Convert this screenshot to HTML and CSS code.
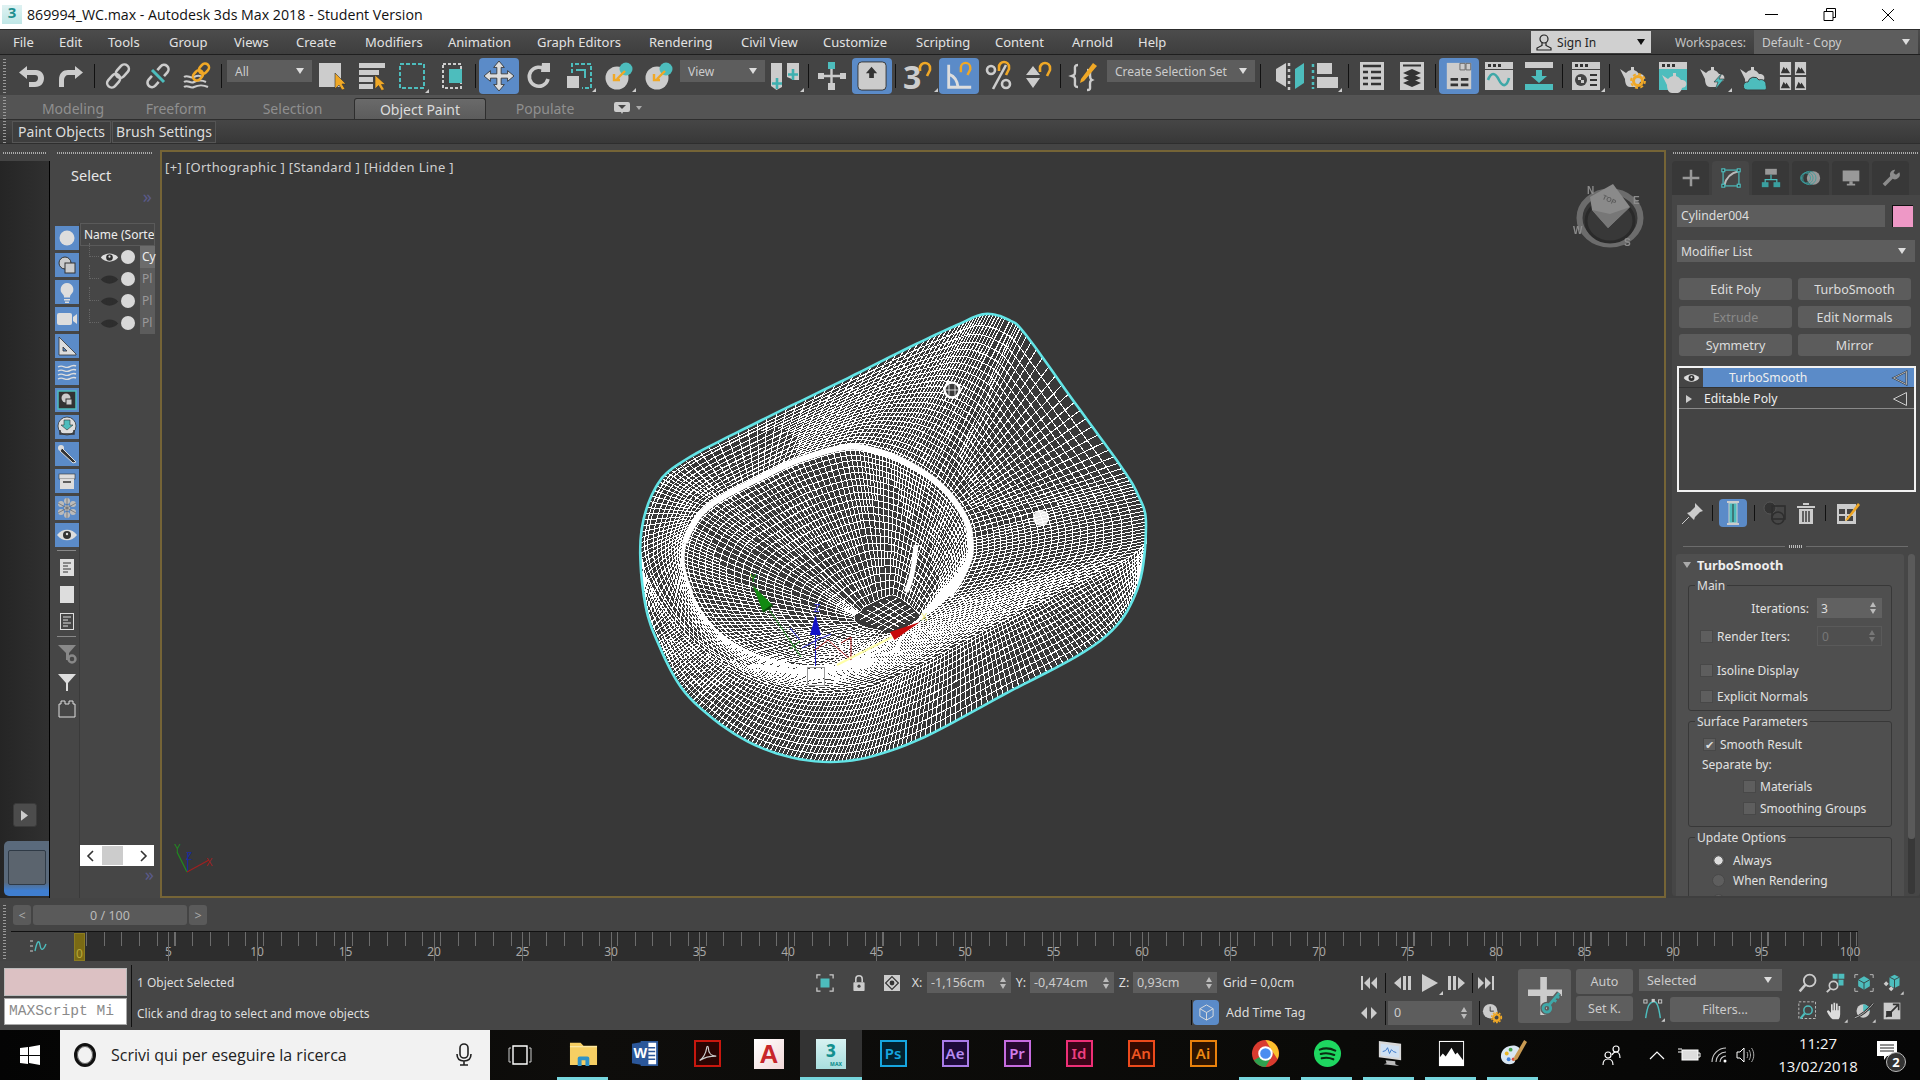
FILE: index.html
```html
<!DOCTYPE html>
<html lang="it">
<head>
<meta charset="utf-8">
<title>869994_WC.max - Autodesk 3ds Max 2018 - Student Version</title>
<link rel="stylesheet" href="styles.css">
</head>
<body>
<svg class="defs" width="0" height="0">
<defs>
<symbol id="eye" viewBox="0 0 24 14"><path d="M1 7C6 0 18 0 23 7 18 14 6 14 1 7z" fill="currentColor"/><circle cx="12" cy="7" r="4.2" fill="#2e2e2e"/><circle cx="12" cy="6" r="1.4" fill="currentColor"/></symbol>
<symbol id="pot" viewBox="0 0 28 28"><path d="M1 7l6 4a8 8 0 0 1 5-3V5h3v3a8 8 0 0 1 5 4h2a4 4 0 0 1 2 7l-3 1c-1 4-3 5-5 5h-5c-3 0-5-3-5-8z" fill="#ccc"/></symbol>
<symbol id="mnt" viewBox="0 0 12 14"><rect width="12" height="14" fill="#ccc"/><path d="M1 12l3-7 2 3 1-2 4 6z" fill="#333"/></symbol>
</defs>
</svg>

<header class="titlebar">
  <div class="appicon"><span class="big3">3</span></div>
  <div class="title">869994_WC.max - Autodesk 3ds Max 2018 - Student Version</div>
  <div class="winctl">
    <svg class="wbtn" viewBox="0 0 58 29"><path d="M23 14.5h13" stroke="#000"/></svg>
    <svg class="wbtn" viewBox="0 0 58 29"><path d="M24 11.5h9v9h-9zM26.500 11V8.500h9v9H33" fill="none" stroke="#000"/></svg>
    <svg class="wbtn" viewBox="0 0 58 29"><path d="M24 9l12 12M36 9 24 21" stroke="#000" fill="none"/></svg>
  </div>
</header>

<nav class="menubar">
  <span class="m" style="width:46px">File</span><span class="m" style="width:49px">Edit</span><span class="m" style="width:61px">Tools</span><span class="m" style="width:65px">Group</span><span class="m" style="width:62px">Views</span><span class="m" style="width:69px">Create</span><span class="m" style="width:83px">Modifiers</span><span class="m" style="width:89px">Animation</span><span class="m" style="width:112px">Graph Editors</span><span class="m" style="width:92px">Rendering</span><span class="m" style="width:82px">Civil View</span><span class="m" style="width:93px">Customize</span><span class="m" style="width:79px">Scripting</span><span class="m" style="width:77px">Content</span><span class="m" style="width:66px">Arnold</span><span class="m">Help</span>
  <div class="signin">
    <svg class="signic" viewBox="0 0 16 18"><circle cx="8" cy="6" r="4" fill="none" stroke="#222" stroke-width="1.200"/><path d="M6 9.500v3l-5 2.500v2h14v-2l-5-2.500v-3" fill="none" stroke="#222" stroke-width="1.200"/></svg>
    <span class="signtxt">Sign In</span><span class="caret dark"></span>
  </div>
  <span class="wslabel">Workspaces:</span>
  <div class="drop ws"><span>Default - Copy</span><span class="caret"></span></div>
</nav>

<div class="toolbar">
  <span class="vgrip"></span>
  <div class="tb"><svg viewBox="0 0 28 28"><path d="M10 4 2 10.500 10 17v-4h8c2 0 3 1 3 3s-1 4-4 4h-5v5h6c6 0 9-4 9-9 0-4-3-8-8-8h-9z" fill="#ccc"/></svg></div>
  <div class="tb"><svg viewBox="0 0 28 28"><path d="M18 4 26 10.500 18 17v-4h-7c-2 0-4 2-4 5v7H2v-7C2 11 6 8 11 8h7z" fill="#ccc"/></svg></div>
  <span class="sep"></span>
  <div class="tb"><svg viewBox="0 0 28 28"><g fill="none" stroke="#ccc" stroke-width="2.600" transform="rotate(-48 14 14)"><rect x="0" y="9.500" width="15" height="9" rx="4.500"/><rect x="13" y="9.500" width="15" height="9" rx="4.500"/></g></svg></div>
  <div class="tb"><svg viewBox="0 0 28 28"><g fill="none" stroke="#ccc" stroke-width="2.600" transform="rotate(-48 14 14)"><path d="M10 9.500H5a4.500 4.500 0 0 0 0 9h5M18 9.500h5a4.500 4.500 0 0 1 0 9h-5"/></g><path d="M8 8l12 12" stroke="#4dbdbd" stroke-width="3"/></svg></div>
  <div class="tb"><svg viewBox="0 0 28 28"><g fill="none" stroke="#ccc" stroke-width="2"><path d="M0 15c4-3 6 2 10 0s6-2 8 0M0 20c4-3 6 2 10 0s8-2 12 0M0 25c4-3 6 2 10 0s10-2 14 0"/></g><g fill="none" stroke="#f0a826" stroke-width="2.600" transform="rotate(-48 17 10)"><rect x="7" y="6" width="11" height="8" rx="4"/><rect x="16" y="6" width="11" height="8" rx="4"/></g></svg></div>
  <span class="sep"></span>
  <div class="drop tdrop w85"><span>All</span><span class="caret"></span></div>
  <div class="tb"><svg viewBox="0 0 28 28"><rect x="1" y="1" width="22" height="24" fill="#ccc"/><path d="M17 11v16l4-4 3 5 3-1-3-5h4z" fill="#f0a826" stroke="#333" stroke-width=".6"/></svg></div>
  <div class="tb"><svg viewBox="0 0 28 28"><path d="M1 1h26v5H1zM1 8h20v5H1zM1 15h14v5H1zM1 22h14v5H1z" fill="#ccc"/><path d="M17 13v14l3.500-3.500 3 5 3-1-3-5h4z" fill="#f0a826" stroke="#333" stroke-width=".6"/></svg></div>
  <div class="tb"><svg viewBox="0 0 28 28"><rect x="2" y="2" width="24" height="24" fill="none" stroke="#4dbdbd" stroke-width="2" stroke-dasharray="4 2"/><path d="M28 28v-4l-4 4z" fill="#ccc" transform="translate(3 3)"/></svg></div>
  <div class="tb"><svg viewBox="0 0 28 28"><rect x="5" y="2" width="18" height="24" fill="none" stroke="#ccc" stroke-width="2" stroke-dasharray="3 2"/><rect x="11" y="7" width="13" height="14" fill="#4dbdbd"/></svg></div>
  <span class="sep"></span>
  <div class="tb on"><svg viewBox="0 0 28 28"><path d="M14 0l5 6h-3v6h6V9l6 5-6 5v-3h-6v6h3l-5 6-5-6h3v-6H6v3l-6-5 6-5v3h6V6H9z" fill="#ddd" stroke="#333" stroke-width=".8"/></svg></div>
  <div class="tb"><svg viewBox="0 0 28 28"><path d="M20.500 8A9.500 9.500 0 1 0 23 17" fill="none" stroke="#ccc" stroke-width="3.600"/><path d="M17 1h8v9h-9z" fill="#ccc"/></svg></div>
  <div class="tb"><svg viewBox="0 0 28 28"><rect x="2" y="14" width="12" height="12" fill="#ccc"/><path d="M7 11V2h19v24h-9" fill="none" stroke="#4dbdbd" stroke-width="2" stroke-dasharray="4 2"/><path d="M11 8h9v8" fill="none" stroke="#4dbdbd" stroke-width="2"/><path d="M31 30v-4l-4 4z" fill="#ccc"/></svg></div>
  <div class="tb"><svg viewBox="0 0 28 28"><circle cx="12" cy="16" r="11.500" fill="#ccc"/><circle cx="21" cy="7" r="6.500" fill="#4dbdbd"/><path d="M20 9l-8 8M9 12v6h6" fill="none" stroke="#f0a826" stroke-width="2.400"/><path d="M31 30v-4l-4 4z" fill="#ccc"/></svg></div>
  <div class="tb"><svg viewBox="0 0 28 28"><circle cx="12" cy="16" r="11.500" fill="#ccc"/><circle cx="21" cy="7" r="6.500" fill="#4dbdbd"/><path d="M20 9l-8 8M9 12v6h6" fill="none" stroke="#f0a826" stroke-width="2.400"/></svg></div>
  <div class="drop tdrop w85 vd"><span>View</span><span class="caret"></span></div>
  <div class="tb"><svg viewBox="0 0 28 28"><path d="M0 1h11v24l-5.500 3L0 24z" fill="#ccc"/><path d="M16 1h12v17h-5l-7-3z" fill="#ccc"/><path d="M6 16v11M1 21.500h10M22 7v11M17 12.500h10" stroke="#3fb0b0" stroke-width="2.600"/><path d="M33 30v-4l-4 4z" fill="#ccc"/></svg></div>
  <span class="sep"></span>
  <div class="tb"><svg viewBox="0 0 28 28"><rect x="10" y="0" width="7" height="7" fill="#4dbdbd"/><path d="M13.500 7v14M1 14h26" stroke="#ccc" stroke-width="2.400"/><rect x="0" y="11" width="6" height="6" fill="#ccc"/><rect x="22" y="11" width="6" height="6" fill="#ccc"/><rect x="10" y="21" width="7" height="7" fill="#ccc"/></svg></div>
  <div class="tb on"><svg viewBox="0 0 32 32"><rect x="1" y="1" width="30" height="30" rx="4" fill="#ccc" stroke="#333"/><path d="M15.500 6l6 7h-3.500v5h-5v-5H9.500z" fill="#333"/></svg></div>
  <span class="sep"></span>
  <div class="tb"><svg viewBox="0 0 28 28"><text x="-2" y="27" class="snaptxt">3</text><path d="M15 9V6a5 5 0 0 1 10 0v2l-3 6" fill="none" stroke="#f0a826" stroke-width="2.600"/><path d="M33 30v-4l-4 4z" fill="#ccc"/></svg></div>
  <div class="tb on"><svg viewBox="0 0 32 32"><path d="M5 4v24h24" fill="none" stroke="#ddd" stroke-width="3"/><path d="M5 14c6 2 9 6 10 14" fill="none" stroke="#ddd" stroke-width="3"/><path d="M18 12V7a5 5 0 0 1 10 0v2l-3 6" fill="none" stroke="#f0a826" stroke-width="2.600"/></svg></div>
  <div class="tb"><svg viewBox="0 0 28 28"><circle cx="6" cy="8" r="4" fill="none" stroke="#ccc" stroke-width="2.600"/><circle cx="21" cy="22" r="4" fill="none" stroke="#ccc" stroke-width="2.600"/><path d="M21 3 8 27" stroke="#ccc" stroke-width="2.600"/><path d="M14 9V5a5 5 0 0 1 10 0v2l-3 6" fill="none" stroke="#f0a826" stroke-width="2.600"/></svg></div>
  <div class="tb"><svg viewBox="0 0 28 28"><path d="M8 4l7 9H1zM1 16h14l-7 10z" fill="#ccc"/><path d="M15 10V6a5 5 0 0 1 10 0v2l-3 6" fill="none" stroke="#f0a826" stroke-width="2.600"/></svg></div>
  <span class="sep s2"></span>
  <div class="tb"><svg viewBox="0 0 28 28"><path d="M8 3C4 3 5 6 5 9s0 4-3 5c3 1 3 2 3 5s-1 6 3 6M17 8c4 0 3 3 3 5s0 4 2 5c-2 1-2 2-2 5s1 5-3 5" fill="none" stroke="#ccc" stroke-width="2.400"/><path d="M11 17 23 1l4 3-13 15-4 2z" fill="#f0a826"/></svg></div>
  <div class="drop tdrop css"><span>Create Selection Set</span><span class="caret"></span></div>
  <span class="sep s3"></span>
  <div class="tb"><svg viewBox="0 0 28 28"><path d="M0 7l10-6v24L0 19z" fill="#ccc"/><path d="M13 1v3M13 7v3M13 13v3M13 19v3M13 25v3" stroke="#ccc" stroke-width="2.500"/><path d="M19 7l9-6v20l-9 6z" fill="#4dbdbd"/></svg></div>
  <div class="tb al"><svg viewBox="0 0 28 28"><path d="M2 2v3M2 8v3M2 14v3M2 20v3M2 25v2" stroke="#4dbdbd" stroke-width="2.500"/><rect x="6" y="1" width="15" height="11" fill="#ccc"/><rect x="6" y="15" width="21" height="11" fill="#ccc"/><path d="M31 30v-4l-4 4z" fill="#ccc"/></svg></div>
  <span class="sep"></span>
  <div class="tb"><svg viewBox="0 0 28 28"><rect x="2" y="0" width="24" height="28" fill="#ccc"/><path d="M5 4h18M5 10h5M13 10h10M5 16h5M13 16h10M5 22h5M13 22h10" stroke="#333" stroke-width="2.400"/></svg></div>
  <div class="tb"><svg viewBox="0 0 28 28"><rect x="2" y="0" width="24" height="28" fill="#ccc"/><path d="M5 3.500h18" stroke="#333" stroke-width="2"/><path d="M14 7l9 4-9 4-9-4zM14 12l9 4-9 4-9-4zM14 17l9 4-9 4-9-4z" fill="#333"/></svg></div>
  <span class="sep"></span>
  <div class="tb on"><svg viewBox="0 0 32 32"><path d="M3 2h26v28H3z" fill="#ccc"/><path d="M17 2.500h5.500v7H17zM23.500 2.500h5v7h-5z" fill="#ccc" stroke="#666"/><path d="M7 18h8v3H7zM18 18h8v3h-8zM7 24h8v3H7zM18 24h8v3h-8z" fill="#333"/></svg></div>
  <div class="tb"><svg viewBox="0 0 28 28"><rect width="28" height="7" fill="#ccc"/><path d="M3 2h3v3H3zM8 2h3v3H8zM13 2h3v3h-3z" fill="#333"/><rect y="8" width="28" height="20" fill="#ccc"/><path d="M3 18c3-8 7-8 11 0s8 6 10-2" fill="none" stroke="#3fa8a8" stroke-width="2.600"/></svg></div>
  <div class="tb"><svg viewBox="0 0 28 28"><rect y="0" width="28" height="6" fill="#ccc"/><path d="M11 8h6v6h5l-8 7-8-7h5z" fill="#4dbdbd"/><rect y="22" width="28" height="6" fill="#4dbdbd"/></svg></div>
  <span class="sep"></span>
  <div class="tb"><svg viewBox="0 0 28 28"><rect width="28" height="7" fill="#ccc"/><path d="M3 2h3v3H3zM8 2h3v3H8zM13 2h3v3h-3z" fill="#333"/><rect y="8" width="28" height="20" fill="#ccc"/><circle cx="9" cy="18" r="6" fill="#444"/><path d="M6 15h3v3H6zM9 18h3v3H9z" fill="#ccc"/><path d="M18 13h7M18 18h7M18 23h7" stroke="#333" stroke-width="2"/><path d="M33 30v-4l-4 4z" fill="#ccc"/></svg></div>
  <span class="sep"></span>
  <div class="tb"><svg viewBox="0 0 28 28"><use href="#pot"/><circle cx="19" cy="19" r="4.500" fill="none" stroke="#f0a826" stroke-width="3"/><circle cx="19" cy="19" r="7" fill="none" stroke="#f0a826" stroke-width="1.800" stroke-dasharray="3 2.500"/></svg></div>
  <div class="tb"><svg viewBox="0 0 28 28"><rect width="28" height="28" fill="#4dbdbd"/><rect width="28" height="7" fill="#ccc"/><path d="M3 2h3v3H3zM8 2h3v3H8zM13 2h3v3h-3z" fill="#333"/><svg x="2" y="6" width="24" height="22" viewBox="0 0 28 28"><use href="#pot"/></svg></svg></div>
  <div class="tb"><svg viewBox="0 0 28 28"><use href="#pot"/><path d="M23 11l-8 9h4l-3 8 9-11h-5z" fill="#4dbdbd" stroke="#333" stroke-width=".6"/><path d="M33 30v-4l-4 4z" fill="#ccc"/></svg></div>
  <div class="tb"><svg viewBox="0 0 28 28"><use href="#pot"/><path d="M8 28a4 4 0 0 1 1-8 6 6 0 0 1 11-2 5 5 0 0 1 7 5c1 3 0 5-1 5z" fill="#4dbdbd" stroke="#3c3c3c"/></svg></div>
  <div class="tb"><svg viewBox="0 0 28 28"><use href="#mnt" width="13" height="13"/><use href="#mnt" x="15" width="13" height="13"/><use href="#mnt" y="15" width="13" height="13"/><use href="#mnt" x="15" y="15" width="13" height="13"/></svg></div>
</div>

<div class="ribbontabs">
  <span class="vgrip g2"></span>
  <span class="rt" style="width:124px">Modeling</span><span class="rt" style="width:82px">Freeform</span><span class="rt" style="width:137px;padding-left:14px">Selection</span><span class="rt act">Object Paint</span><span class="rt" style="width:118px">Populate</span>
  <svg class="chat" viewBox="0 0 16 12"><path d="M2 0h12a2 2 0 0 1 2 2v6a2 2 0 0 1-2 2H9l-1 2-1-2H2a2 2 0 0 1-2-2V2a2 2 0 0 1 2-2z" fill="#ccc"/><path d="M4 3h8l-4 4z" fill="#444"/></svg>
  <span class="caret tiny"></span>
</div>
<div class="ribbonpanel">
  <span class="vgrip g2"></span>
  <span class="rb" style="width:99px">Paint Objects</span><span class="rb" style="width:104px">Brush Settings</span>
</div>
<div class="gapstrip"></div>

<main class="main">
  <aside class="leftstrip">
    <div class="gripwrap"><span class="hgrip"></span></div>
    <div class="leftdark">
      <div class="playbtn"><svg viewBox="0 0 8 12"><path d="M0 0l8 6-8 6z" fill="#ccc"/></svg></div>
      <div class="vpthumb"><div class="vpthumbin"></div></div>
    </div>
  </aside>
  <aside class="explorer">
    <div class="exhead">
      <div class="gripwrap pad"><span class="hgrip"></span></div>
      <div class="seltitle">Select</div>
      <div class="chev">»</div>
    </div>
    <div class="exbody">
      <div class="xcol">
        <div class="xi"><svg viewBox="0 0 24 24"><circle cx="12" cy="12" r="7.500" fill="#ddd"/></svg></div>
        <div class="xi"><svg viewBox="0 0 24 24"><circle cx="10" cy="10" r="6" fill="#ccc" stroke="#333" stroke-width="1"/><rect x="10" y="10" width="10" height="10" fill="#ccc" stroke="#333"/></svg></div>
        <div class="xi"><svg viewBox="0 0 24 24"><path d="M12 3a6.500 6.500 0 0 0-4 11.500c1 1 1 2 1 3h6c0-1 0-2 1-3A6.500 6.500 0 0 0 12 3zM9 19h6v1.500H9zM10 21.500h4V23h-4z" fill="#ddd"/></svg></div>
        <div class="xi"><svg viewBox="0 0 24 24"><rect x="2" y="6" width="15" height="12" rx="2" fill="#ddd"/><path d="M18 10l4-3v10l-4-3z" fill="#ddd"/></svg></div>
        <div class="xi"><svg viewBox="0 0 24 24"><path d="M4 3l17 17v1H4zM8 13v4h4z" fill="#ddd" fill-rule="evenodd" stroke="#333" stroke-width=".8"/></svg></div>
        <div class="xi"><svg viewBox="0 0 24 24"><path d="M3 6c5-3 7 2 11 0s5-2 7-1M3 10c5-3 7 2 11 0s5-2 7-1M3 14c5-3 7 2 11 0s5-2 7-1M3 18c5-3 7 2 11 0s5-2 7-1" fill="none" stroke="#ddd" stroke-width="1.400"/></svg></div>
        <div class="xi"><svg viewBox="0 0 24 24"><rect x="3" y="3" width="18" height="18" fill="#333" stroke="#4dbdbd" stroke-width="1.500"/><circle cx="11" cy="10" r="4.500" fill="#ccc"/><rect x="11" y="11" width="6" height="6" fill="#ccc" stroke="#333"/></svg></div>
        <div class="xi"><svg viewBox="0 0 24 24"><circle cx="12" cy="11" r="9" fill="#ddd" stroke="#333" stroke-width=".8"/><path d="M9 5h6v5h3l-6 5-6-5h3z" fill="#4dbdbd" stroke="#333" stroke-width=".6"/><path d="M5 15v4h14v-4" fill="none" stroke="#333" stroke-width="1.400"/></svg></div>
        <div class="xi"><svg viewBox="0 0 24 24"><circle cx="6" cy="6" r="3" fill="#ddd"/><path d="M7 6l14 14-3 1L5 9z" fill="#333" stroke="#ddd"/></svg></div>
        <div class="xi"><svg viewBox="0 0 24 24"><rect x="4" y="5" width="16" height="5" fill="#ddd" stroke="#333" stroke-width=".6"/><rect x="5" y="10" width="14" height="10" fill="#ddd"/><path d="M8 13h8" stroke="#333" stroke-width="1.500"/></svg></div>
        <div class="xi"><svg viewBox="0 0 24 24"><g fill="#bbb"><circle cx="12" cy="12" r="3"/><circle cx="12" cy="5" r="3"/><circle cx="12" cy="19" r="3"/><circle cx="6" cy="8" r="3"/><circle cx="18" cy="8" r="3"/><circle cx="6" cy="16" r="3"/><circle cx="18" cy="16" r="3"/></g><path d="M12 2v20M3 7l18 10M21 7 3 17" stroke="#666" stroke-width=".7"/></svg></div>
        <div class="xi"><svg viewBox="0 0 24 24"><path d="M2 12C7 5 17 5 22 12 17 19 7 19 2 12z" fill="#ddd"/><circle cx="12" cy="12" r="4" fill="#333"/><circle cx="12" cy="11" r="1.200" fill="#ddd"/></svg></div>
        <div class="xsep"></div>
        <div class="xp"><svg viewBox="0 0 24 24"><rect x="3" y="0" width="14" height="17" fill="#ddd" transform="translate(2 4)"/><path d="M8 8h8M8 11h5M8 14h8M8 17h5" stroke="#333"/></svg></div>
        <div class="xp"><svg viewBox="0 0 24 24"><rect x="5" y="4" width="14" height="17" fill="#ddd"/></svg></div>
        <div class="xp"><svg viewBox="0 0 24 24"><rect x="5.500" y="4.500" width="13" height="16" fill="none" stroke="#ddd"/><path d="M8 8h8M8 11h5M8 14h8M8 17h5" stroke="#ddd"/></svg></div>
        <div class="xsep s"></div>
        <div class="xp"><svg viewBox="0 0 24 24"><path d="M3 3h18l-7 8v7h-3v-7z" fill="#888"/><circle cx="17" cy="17" r="3.500" fill="none" stroke="#888" stroke-width="2.400"/></svg></div>
        <div class="xp"><svg viewBox="0 0 24 24"><path d="M3 5h18l-8 9v8h-2v-8z" fill="#ddd"/></svg></div>
        <div class="xp"><svg viewBox="0 0 24 24"><path d="M4 8h2V5h4v3h4V5h4v3h2v13H4z" fill="none" stroke="#ddd"/></svg></div>
      </div>
      <div class="xlist">
        <div class="xhead">Name (Sorte</div>
        <div class="xrow"><span class="stub"></span><svg class="roweye"><use href="#eye" style="color:#ddd"/></svg><span class="rowdot"></span><span class="rowname cur">Cy</span></div>
        <div class="xrow"><span class="stub"></span><svg class="roweye"><use href="#eye" style="color:#2e2e2e"/></svg><span class="rowdot"></span><span class="rowname">Pl</span></div>
        <div class="xrow"><span class="stub"></span><svg class="roweye"><use href="#eye" style="color:#2e2e2e"/></svg><span class="rowdot"></span><span class="rowname">Pl</span></div>
        <div class="xrow"><span class="stub"></span><svg class="roweye"><use href="#eye" style="color:#2e2e2e"/></svg><span class="rowdot"></span><span class="rowname">Pl</span></div>
        <div class="xscroll"><svg viewBox="0 0 8 12"><path d="M7 1 2 6l5 5" fill="none" stroke="#333" stroke-width="1.600"/></svg><span class="xthumb"></span><svg viewBox="0 0 8 12"><path d="M1 1l5 5-5 5" fill="none" stroke="#333" stroke-width="1.600"/></svg></div>
        <div class="chev low">»</div>
      </div>
    </div>
  </aside>

  <section class="viewport">
    <div class="vplabel">[+] [Orthographic ] [Standard ] [Hidden Line ]</div>
    <svg id="mesh" class="meshsvg" viewBox="162 152 1502 744" xmlns="http://www.w3.org/2000/svg">
      <g id="meshlines"></g>
      <g class="gizmo">
        <path d="M768 608 801 657M790 649 800 641" stroke="#1a8a1a" fill="none"/>
        <path d="M815.500 635V666M800 640 790 628M802 648l15-8 14-6" stroke="#2020c8" fill="none"/>
        <path d="M828 640 851 660V637l-10 6M828 640l-13 10" stroke="#b02020" fill="none"/>
        <path d="M892 637 837 665" stroke="#ffffa8" stroke-width="2"/>
        <path d="M752.500 585 772.500 605 763 612z" fill="#128a12"/>
        <path d="M763 612 772.500 605 769 608z" fill="#0a4a0a" stroke="#0a4a0a" stroke-width="2"/>
        <path d="M815.500 615 821 635h-11z" fill="#1010c8"/>
        <path d="M920 622 890 632 894.500 640z" fill="#c80a0a"/>
        <rect x="807.500" y="667.500" width="17" height="18" fill="none" stroke="#999"/>
        <text x="750" y="582" class="gl" fill="#0c9a0c">Y</text>
        <text x="814" y="612" class="gl" fill="#2424d0">Z</text>
        <text x="921" y="621" class="gl" fill="#e6e67a">X</text>
      </g>
      <g class="tripod">
        <path d="M187.500 872V853" stroke="#1c2c9c" stroke-width="1.200"/>
        <path d="M187 872 177 852" stroke="#1f8a1f" stroke-width="1.200"/>
        <path d="M187 872 209 860" stroke="#a02020" stroke-width="1.200"/>
        <text x="174" y="852" class="tl" fill="#1f8a1f">Y</text>
        <text x="186" y="860" class="tl" fill="#1c2c9c">Z</text>
        <text x="206" y="866" class="tl" fill="#a02020">X</text>
      </g>
      <g class="cube">
        <ellipse cx="1610" cy="218" rx="30.500" ry="26.500" fill="none" stroke="#6c6c6c" stroke-width="6"/>
        <ellipse cx="1610" cy="221" rx="24" ry="21" fill="none" stroke="#2a2a2a" stroke-width="3"/>
        <path d="M1590 197 1613 184 1630 207 1608 228 1592 210z" fill="#8a8a8a"/>
        <path d="M1592 210 1608 228 1630 207 1610 214z" fill="#777"/>
        <text x="1602" y="202" class="cl" transform="rotate(25 1609 200)" fill="#5c5c5c">TOP</text>
        <text x="1587" y="194" class="cd">N</text><text x="1633" y="204" class="cd">E</text>
        <text x="1624" y="246" class="cd">S</text><text x="1573" y="234" class="cd">W</text>
      </g>
    </svg>
  </section>

  <aside class="cmd">
    <div class="gripwrap rgrip"><span class="hgrip"></span></div>
    <div class="cmdtabs">
      <div class="ct"><svg viewBox="0 0 24 24"><path d="M10.500 2h3v8.500H22v3h-8.500V22h-3v-8.500H2v-3h8.500z" fill="#999"/></svg></div>
      <div class="ct act"><svg viewBox="0 0 24 24"><path d="M4 21C6 12 12 6 21 4" fill="none" stroke="#bbb" stroke-width="2.400"/><rect x="2.500" y="2.500" width="19" height="19" fill="none" stroke="#4dbdbd" stroke-width="1.400"/><g fill="#333" stroke="#4dbdbd" stroke-width="1.400"><rect x="1" y="1" width="3.500" height="3.500"/><rect x="19.500" y="1" width="3.500" height="3.500"/><rect x="1" y="19.500" width="3.500" height="3.500"/><rect x="19.500" y="19.500" width="3.500" height="3.500"/></g></svg></div>
      <div class="ct"><svg viewBox="0 0 24 24"><rect x="5" y="1" width="14" height="7" fill="#999"/><path d="M12 8v6M5 18v-4h14v4" fill="none" stroke="#4dbdbd" stroke-width="1.400"/><rect x="1" y="17" width="8" height="6" fill="#3a9f9f"/><rect x="15" y="17" width="8" height="6" fill="#3a9f9f"/></svg></div>
      <div class="ct"><svg viewBox="0 0 24 24"><circle cx="15" cy="12" r="8" fill="#999"/><circle cx="10" cy="12" r="8" fill="none" stroke="#3a9f9f"/><circle cx="7.500" cy="12" r="7" fill="none" stroke="#3a9f9f"/><circle cx="5.500" cy="12" r="6" fill="none" stroke="#3a9f9f"/></svg></div>
      <div class="ct"><svg viewBox="0 0 24 24"><rect x="2" y="3" width="20" height="13" fill="#999"/><path d="M10 16h4v3h-4zM7 19h10v2H7z" fill="#999"/></svg></div>
      <div class="ct"><svg viewBox="0 0 24 24"><path d="M16 2a6 6 0 0 0-5 8L2 19l3 3 9-9a6 6 0 0 0 8-8l-4 3-3-2 2-4z" fill="#8c8c8c"/></svg></div>
    </div>
    <div class="cmdbody">
      <div class="namerow"><div class="field name">Cylinder004</div><div class="swatch"></div></div>
      <div class="field modlist"><span>Modifier List</span><span class="caret"></span></div>
      <div class="modbtns">
        <div class="mb">Edit Poly</div><div class="mb">TurboSmooth</div>
        <div class="mb off">Extrude</div><div class="mb">Edit Normals</div>
        <div class="mb">Symmetry</div><div class="mb">Mirror</div>
      </div>
      <div class="stack">
        <div class="srow sel"><span class="seye"><svg class="sey"><use href="#eye" style="color:#ddd"/></svg></span><span class="stxt">TurboSmooth</span>
          <svg class="stri" viewBox="0 0 16 16"><path d="M14.500 1.500 1.500 8l13 6.500z" fill="none" stroke="#333" stroke-width="1.800"/><path d="M14.500 1.500 1.500 8l13 6.500z" fill="none" stroke="#ddd" stroke-width=".7"/></svg></div>
        <div class="srow two"><span class="sarrow"></span><span>Editable Poly</span>
          <svg class="stri" viewBox="0 0 16 16"><path d="M14.500 1.500 1.500 8l13 6.500z" fill="none" stroke="#ccc"/></svg></div>
      </div>
      <div class="stools">
        <svg class="st" viewBox="0 0 24 24"><path d="M14 2l8 8-3 1-5 5-1 3-7-7 3-1 5-5z" fill="#ccc"/><path d="M8 16l-7 7" stroke="#ccc"/></svg>
        <span class="ssep"></span>
        <div class="stbtn"><svg viewBox="0 0 14 24"><rect x="3" y="2" width="8" height="20" fill="#4dbdbd" stroke="#ccc"/><path d="M1 1h12M1 23h12" stroke="#ccc" stroke-width="2"/><path d="M7 3v18" stroke="#333"/></svg></div>
        <span class="ssep"></span>
        <svg class="st" viewBox="0 0 24 24"><circle cx="7" cy="7" r="6" fill="#333" stroke="#555"/><rect x="9" y="5" width="13" height="13" fill="none" stroke="#2e2e2e" stroke-width="1.600"/><circle cx="15" cy="17" r="6" fill="none" stroke="#2e2e2e" stroke-width="1.600"/></svg>
        <svg class="st" viewBox="0 0 24 24"><path d="M3 5h18v2H3zM9 2h6v2H9zM5 8h14v15H5z" fill="#ccc"/><path d="M9 10v11M12 10v11M15 10v11" stroke="#333" stroke-width="1.400"/></svg>
        <span class="ssep"></span>
        <svg class="st" viewBox="0 0 24 24"><rect x="1" y="3" width="19" height="20" fill="#ccc"/><path d="M3 8h6v5H3zM11 8h6v5h-6zM3 15h6v5H3zM11 15h6v5h-6z" fill="#444"/><path d="M10 18 22 2l2 2-12 15-3 1z" fill="#f0a826"/></svg>
      </div>
      <div class="sash"><span></span><i></i><span></span></div>
      <div class="rollwrap">
        <div class="roll">
          <div class="rhead"><span class="rtri"></span><b>TurboSmooth</b><span class="rdots"></span></div>
          <div class="grp g-main">
            <span class="lg">Main</span>
            <div class="r it"><span class="rl">Iterations:</span><div class="spin"><span>3</span><span class="spa"></span></div></div>
            <div class="r ri"><span class="cb"></span><span class="rl2">Render Iters:</span><div class="spin dis"><span>0</span><span class="spa"></span></div></div>
            <div class="r iso"><span class="cb"></span><span>Isoline Display</span></div>
            <div class="r exn"><span class="cb"></span><span>Explicit Normals</span></div>
          </div>
          <div class="grp g-surf">
            <span class="lg">Surface Parameters</span>
            <div class="r2"><span class="cb chk">✔</span><span>Smooth Result</span></div>
            <div class="r2 sb"><span>Separate by:</span></div>
            <div class="r2 in"><span class="cb"></span><span>Materials</span></div>
            <div class="r2 in"><span class="cb"></span><span>Smoothing Groups</span></div>
          </div>
          <div class="grp g-upd">
            <span class="lg">Update Options</span>
            <div class="r2 rad"><span class="radio on"></span><span>Always</span></div>
            <div class="r2 rad"><span class="radio"></span><span>When Rendering</span></div>
            <div class="r2 rad"><span class="radio"></span></div>
          </div>
        </div>
        <div class="rscroll"><span></span></div>
      </div>
    </div>
  </aside>
</main>

<div class="timeslider">
  <span class="vgrip g3"></span>
  <div class="ts small">&lt;</div><div class="ts mid">0 / 100</div><div class="ts small">&gt;</div>
</div>
<div class="trackrow">
  <span class="vgrip g3 tall"></span>
  <div class="curve"><svg viewBox="0 0 20 14"><path d="M2 2h3M2 7h3M2 12h3" stroke="#ccc"/><path d="M7 12C9 2 11 0 12 6s3 6 6-1" fill="none" stroke="#4dbdbd" stroke-width="1.400"/></svg></div>
  <div class="track">
    <div class="labels"><span></span><span>5</span><span>10</span><span>15</span><span>20</span><span>25</span><span>30</span><span>35</span><span>40</span><span>45</span><span>50</span><span>55</span><span>60</span><span>65</span><span>70</span><span>75</span><span>80</span><span>85</span><span>90</span><span>95</span><span>100</span></div>
    <div class="thumb">0</div>
  </div>
</div>

<footer class="status">
  <div class="mini"><div class="pink"></div><div class="script">MAXScript Mi</div></div>
  <span class="vbar"></span>
  <div class="msg"><div>1 Object Selected</div><div>Click and drag to select and move objects</div></div>
  <div class="coords">
    <div class="crow">
      <svg class="ci" viewBox="0 0 20 20"><path d="M1 5V1h4M15 1h4v4M1 15v4h4M19 15v4h-4" fill="none" stroke="#ccc" stroke-width="1.400"/><rect x="5" y="5" width="10" height="10" fill="#4dbdbd"/></svg>
      <svg class="ci lock" viewBox="0 0 20 20"><rect x="3" y="9" width="14" height="11" rx="1" fill="#ccc"/><path d="M6 9V5a4 4 0 0 1 8 0v4" fill="none" stroke="#ccc" stroke-width="2"/><circle cx="10" cy="14" r="2" fill="#444"/></svg>
      <svg class="ci abs" viewBox="0 0 20 20"><rect width="20" height="20" fill="#ccc"/><path d="M10 2l8 8-8 8-8-8z" fill="none" stroke="#333" stroke-width="1.500"/><circle cx="10" cy="10" r="3" fill="#333"/></svg>
      <span class="ax">X:</span><div class="cin"><span>-1,156cm</span><span class="spa"></span></div>
      <span class="ax">Y:</span><div class="cin"><span>-0,474cm</span><span class="spa"></span></div>
      <span class="ax">Z:</span><div class="cin"><span>0,93cm</span><span class="spa"></span></div>
      <span class="grid">Grid = 0,0cm</span>
    </div>
    <div class="crow two">
      <span class="tagbar"></span>
      <div class="tagbtn"><svg viewBox="0 0 18 18"><path d="M9 1l7 4v8l-7 4-7-4V5zM2 5l7 4 7-4M9 9v8" fill="none" stroke="#ddd"/></svg></div>
      <span class="tagt">Add Time Tag</span>
    </div>
  </div>
  <div class="anim">
    <div class="arow">
      <svg viewBox="0 0 18 14" class="a1"><path d="M1 0h2v14H1zM10 1 4 7l6 6zM17 1l-6 6 6 6z" fill="#ccc"/></svg>
      <span class="abar"></span>
      <svg viewBox="0 0 18 14" class="a1"><path d="M8 1 1 7l7 6zM10 0h3v14h-3zM15 0h3v14h-3z" fill="#ccc"/></svg>
      <svg viewBox="0 0 18 20" class="a2"><path d="M1 1l16 9-16 9z" fill="#ccc"/><path d="M22 22v-4l-4 4z" fill="#ccc"/></svg>
      <svg viewBox="0 0 18 14" class="a1"><path d="M0 0h3v14H0zM5 0h3v14H5zM10 1l7 6-7 6z" fill="#ccc"/></svg>
      <span class="abar"></span>
      <svg viewBox="0 0 18 14" class="a1"><path d="M1 1l6 6-6 6zM8 1l6 6-6 6zM15 0h2v14h-2z" fill="#ccc"/></svg>
    </div>
    <div class="arow r2nd">
      <svg viewBox="0 0 18 14" class="a1"><path d="M7 1 1 7l6 6zM11 1l6 6-6 6z" fill="#ccc"/></svg>
      <span class="abar"></span>
      <div class="fin"><span>0</span><span class="spa"></span></div>
      <span class="abar"></span>
      <svg viewBox="0 0 22 22" class="a3"><circle cx="9" cy="9" r="8" fill="#ccc"/><path d="M9 4v5h4" fill="none" stroke="#333"/><circle cx="16" cy="16" r="3.500" fill="none" stroke="#f0a826" stroke-width="2.600"/><circle cx="16" cy="16" r="5.500" fill="none" stroke="#f0a826" stroke-width="1.400" stroke-dasharray="2 1.500"/></svg>
    </div>
  </div>
  <div class="keybtn"><svg viewBox="0 0 36 40"><path d="M13 0h7v13h16v7H20v20h-7V20H0v-7h13z" fill="#ccc"/><g fill="none" stroke="#5e5e5e" stroke-width="6"><circle cx="20" cy="33" r="4"/><path d="M22 30 33 17"/></g><g fill="none" stroke="#3fa8a8" stroke-width="3"><circle cx="20" cy="33" r="4"/><path d="M22 30 33 17M30 20l3 2M27 24l3 2"/></g></svg></div>
  <div class="keycol"><div class="kb">Auto</div><div class="kb">Set K.</div></div>
  <div class="selcol">
    <div class="drop seldrop"><span>Selected</span><span class="caret"></span></div>
    <div class="selrow">
      <svg viewBox="0 0 22 24" class="spl"><path d="M3 22C5 8 7 5 11 4s6 4 8 18" fill="none" stroke="#4dbdbd" stroke-width="1.600"/><rect x="1" y="2" width="3.500" height="3.500" fill="none" stroke="#ccc"/><rect x="17" y="2" width="3.500" height="3.500" fill="none" stroke="#ccc"/><rect x="9.500" y="1" width="3.500" height="3.500" fill="#ccc"/><path d="M24 26v-4l-4 4z" fill="#ccc"/></svg>
      <div class="kb filters">Filters...</div>
    </div>
  </div>
  <div class="nav">
    <svg viewBox="0 0 24 24"><circle cx="14" cy="9" r="7" fill="none" stroke="#ccc" stroke-width="2.200"/><path d="M9 14 2 22" stroke="#ccc" stroke-width="3"/></svg>
    <svg viewBox="0 0 24 24"><circle cx="9" cy="15" r="5" fill="none" stroke="#ccc" stroke-width="2"/><path d="M5 19l-4 4" stroke="#ccc" stroke-width="2.400"/><path d="M8 1h6v6H8zM15 1h7v6h-7zM15 8h6v7h-6z" fill="#4dbdbd"/></svg>
    <svg viewBox="0 0 24 24"><path d="M1 6V2h4M19 2h4v4M1 18v4h4M23 18v4h-4" fill="none" stroke="#ccc"/><path d="M12 4l7 4v8l-7 4-7-4V8z" fill="#4dbdbd"/><path d="M5 8l7 4 7-4M12 12v8" fill="none" stroke="#333"/></svg>
    <svg viewBox="0 0 24 24"><path d="M15 2l6 3v10l-6 3-6-3V5z" fill="#4dbdbd"/><path d="M9 5l6 3 6-3M15 8v10" fill="none" stroke="#333"/><path d="M5 10l3 3-3 3-3-3zM11 16l3 3-3 3-3-3z" fill="#ccc"/><path d="M26 26v-4l-4 4z" fill="#ccc"/></svg>
    <svg viewBox="0 0 24 24"><rect x="1" y="1" width="20" height="20" fill="none" stroke="#ccc" stroke-dasharray="3 2"/><circle cx="12" cy="11" r="5" fill="none" stroke="#4dbdbd" stroke-width="1.800"/><path d="M8 15l-5 6" stroke="#4dbdbd" stroke-width="2.400"/></svg>
    <svg viewBox="0 0 24 24"><path d="M8 22c-3-2-6-7-7-10l2-1 3 3V4h2v7h1V2h2v9h1V3h2v8h1V6h2v10c0 3-1 5-2 6z" fill="#ddd"/><path d="M26 26v-4l-4 4z" fill="#ccc"/></svg>
    <svg viewBox="0 0 24 24"><circle cx="11" cy="12" r="8" fill="#ccc"/><path d="M11 4a8 8 0 0 1 8 8h-8z" fill="#4dbdbd"/><path d="M1 20C8 18 18 10 23 3" fill="none" stroke="#333" stroke-width="3"/><path d="M1 20C8 18 18 10 23 3" fill="none" stroke="#ccc"/><path d="M26 26v-4l-4 4z" fill="#ccc"/></svg>
    <svg viewBox="0 0 24 24"><rect x="2" y="2" width="20" height="20" fill="#ccc"/><path d="M13 4h7v7M5 19l14-14" stroke="#333" stroke-width="2" fill="none"/><path d="M5 12h7v7H5z" fill="#333"/></svg>
  </div>
</footer>

<div class="taskbar">
  <div class="start"><svg viewBox="0 0 20 20"><path d="M0 3l8-1v8H0zM9 2l11-2v10H9zM0 11h8v8l-8-1zM9 11h11v9l-11-2z" fill="#fff"/></svg></div>
  <div class="search">
    <span class="cortana"></span>
    <span class="stext">Scrivi qui per eseguire la ricerca</span>
    <svg class="mic" viewBox="0 0 16 24"><rect x="4" y="1" width="8" height="14" rx="4" fill="none" stroke="#222" stroke-width="1.600"/><path d="M1 11c0 5 3 7 7 7s7-2 7-7M8 18v4M4 22h8" fill="none" stroke="#222" stroke-width="1.600"/></svg>
  </div>
  <div class="taskview"><svg viewBox="0 0 24 20"><path d="M5 1h14v18H5z" fill="none" stroke="#fff" stroke-width="1.400"/><path d="M3 3H1v14h2M21 3h2v14h-2" fill="none" stroke="#ccc"/></svg></div>
  <div class="app run"><svg viewBox="0 0 30 30"><path d="M1 4h11l3 3h14v20H1z" fill="#f7cf63"/><path d="M1 8h28" stroke="#fff0b8"/><path d="M9 28v-8a2 2 0 0 1 2-2h8a2 2 0 0 1 2 2v8h-4v-6h-4v6z" fill="#2f93c8"/></svg></div>
  <div class="app"><svg viewBox="0 0 30 30"><path d="M11 3h16v24H11z" fill="#fff" stroke="#2b579a" stroke-width="2"/><path d="M17 9h8M17 13h8M17 17h8M17 21h8" stroke="#2b579a" stroke-width="1.600"/><path d="M1 5l17-3v26L1 25z" fill="#2b579a"/><text x="2.500" y="20" class="wordw">W</text></svg></div>
  <div class="app"><div class="tile" style="border-color:#c8170e;background:#2a0402"><svg viewBox="0 0 24 24"><path d="M3 20c4-3 7-8 8-14 0-3 2-3 2 0 0 6 4 9 9 9-5 0-13 1-19 5z" fill="none" stroke="#ccc" stroke-width="1.400"/></svg></div></div>
  <div class="app"><div class="acad">A</div></div>
  <div class="app cur run"><div class="maxtile"><span>3</span><i>MAX</i></div></div>
  <div class="app"><div class="tile" style="border-color:#16a6e0;background:#02212f;color:#16a6e0">Ps</div></div>
  <div class="app"><div class="tile" style="border-color:#a97ce8;background:#1d0a3a;color:#b68cf0">Ae</div></div>
  <div class="app"><div class="tile" style="border-color:#c66ce0;background:#26082e;color:#d07ce8">Pr</div></div>
  <div class="app"><div class="tile" style="border-color:#ee2f76;background:#3a0418;color:#ee3f80">Id</div></div>
  <div class="app"><div class="tile" style="border-color:#ec4a1c;background:#350a00;color:#ee5522">An</div></div>
  <div class="app"><div class="tile" style="border-color:#e9810c;background:#2e1400;color:#ed8a14">Ai</div></div>
  <div class="app run"><svg viewBox="0 0 30 30"><circle cx="15" cy="15" r="14" fill="#d93b2f"/><path d="M15 15 3 22a14 14 0 0 0 12 7l7-12z" fill="#2ea04f"/><path d="M15 1a14 14 0 0 1 12.500 20L21 11z" fill="#fbc02d"/><circle cx="15" cy="15" r="6.500" fill="#4b8ef0" stroke="#fff" stroke-width="2"/></svg></div>
  <div class="app run"><svg viewBox="0 0 30 30"><circle cx="15" cy="15" r="14" fill="#1ed760"/><path d="M7 11c5-2 11-1.500 16 1M8 15.500c5-1.500 9-1 14 1M9 20c4-1 8-.8 12 1" fill="none" stroke="#0a2a12" stroke-width="2.200" stroke-linecap="round"/></svg></div>
  <div class="app run"><svg viewBox="0 0 30 30"><path d="M4 2l23 3v17l-23-3z" fill="#d8d8d8"/><path d="M6 5l19 2.500v12L6 17z" fill="#cfe0f2"/><path d="M8 13l3-1 2-3 2 6 2-4 2 2 3 1" fill="none" stroke="#3b78c8"/><path d="M11 22l10 1v3l4 2-16-2 3-1z" fill="#bbb"/></svg></div>
  <div class="app run"><svg viewBox="0 0 30 30"><rect x="2" y="2" width="26" height="26" fill="#fff"/><path d="M3 3h24v19l-6-8-2 2-4-7-6 9-3-3-3 4z" fill="#111"/></svg></div>
  <div class="app run"><svg viewBox="0 0 30 30"><path d="M2 18C2 10 10 6 17 7c4 1 5 3 4 6l-4 5c-1 3 1 5-2 7-6 3-13-1-13-7z" fill="#d9e6f2"/><circle cx="8" cy="15" r="2" fill="#e8b524"/><circle cx="12" cy="11" r="2" fill="#43a047"/><circle cx="10" cy="21" r="2" fill="#3f7fd8"/><circle cx="15" cy="21" r="1.800" fill="#d84a3a"/><path d="M26 1l3 2-10 18-4 2 1-5z" fill="#c99a52"/></svg></div>
  <div class="tray">
    <svg class="tr people" viewBox="0 0 22 22"><circle cx="7" cy="11" r="3" fill="none" stroke="#fff" stroke-width="1.200"/><path d="M2 21c0-4 2-6 5-6s5 2 5 6" fill="none" stroke="#fff" stroke-width="1.200"/><circle cx="15" cy="5" r="3" fill="none" stroke="#fff" stroke-width="1.200"/><path d="M11 11c1-2 2-3 4-3s4 2 4 6" fill="none" stroke="#fff" stroke-width="1.200"/></svg>
    <svg class="tr chevup" viewBox="0 0 16 10"><path d="M1 9l7-7 7 7" fill="none" stroke="#fff" stroke-width="1.200"/></svg>
    <svg class="tr batt" viewBox="0 0 22 14"><rect x="4" y="2" width="16" height="10" fill="#ddd" stroke="#fff"/><path d="M20 5h2v4h-2M0 1h4M0 4h4" fill="none" stroke="#fff"/></svg>
    <svg class="tr wifi" viewBox="0 0 20 18"><path d="M2 16A14 14 0 0 1 16 2M6 16A10 10 0 0 1 16 6M10 16A6 6 0 0 1 16 10" fill="none" stroke="#ccc" stroke-width="1.100"/><circle cx="15" cy="15" r="1.500" fill="#fff"/></svg>
    <svg class="tr vol" viewBox="0 0 20 18"><path d="M1 6h3l4-4v14l-4-4H1z" fill="none" stroke="#fff"/><path d="M11 6c1 2 1 4 0 6M13 4c2 3 2 7 0 10M15.500 2c3 4 3 10 0 14" fill="none" stroke="#aaa"/></svg>
    <div class="clock"><div>11:27</div><div>13/02/2018</div></div>
    <div class="notif"><svg viewBox="0 0 20 20"><path d="M0 0h20v15H10l-3 4v-4H0z" fill="#fff"/><path d="M3 4h14M3 7h14M3 10h14" stroke="#222"/></svg><span class="badge">2</span></div>
  </div>
</div>
<script src="mesh.js"></script>
</body>
</html>
```
FILE: styles.css
```css
*{box-sizing:border-box}
html,body{margin:0;padding:0}
body{width:1920px;height:1080px;overflow:hidden;display:flex;flex-direction:column;background:#444;color:#ddd;font:12px "Noto Sans","Open Sans",sans-serif}
.defs{position:absolute}
svg{display:block;overflow:visible}

.titlebar{height:29px;background:#fff;display:flex;align-items:center;color:#111;flex:none}
.appicon{width:20px;height:19px;margin-left:2px;background:linear-gradient(#dff2f2,#bfe6e6);color:#1f8f8f;display:flex;flex-direction:column;align-items:center;font-weight:700;line-height:1}
.big3{font-size:15px;line-height:15px}
.title{margin-left:5px;font-size:14.200px;font-family:"Open Sans","Noto Sans",sans-serif;white-space:nowrap}
.winctl{margin-left:auto;margin-right:4px;display:flex}
.wbtn{width:58px;height:29px}

.menubar{height:26px;flex:none;display:flex;align-items:center;padding-left:13px;background:linear-gradient(#4c4c4c,#3e3e3e);border-top:1px solid #2c2c2c;border-bottom:1px solid #1f1f1f;font-size:13px;color:#e2e2e2}
.m{display:block;white-space:nowrap}
.signin{margin-left:auto;width:120px;height:22px;background:#d0d0d0;color:#222;display:flex;align-items:center;padding:0 4px 0 5px}
.signic{width:16px;height:18px}
.signtxt{margin-left:5px;font-size:12px}
.caret{width:0;height:0;border-left:4px solid transparent;border-right:4px solid transparent;border-top:6px solid #ddd;margin-left:auto;flex:none}
.caret.dark{border-top-color:#111;margin-right:2px}
.caret.tiny{border-width:4px 3px 0;border-top-color:#aaa;margin-left:6px}
.wslabel{margin-left:24px;font-size:12px;color:#c4c4c4}
.drop{display:flex;align-items:center;background:#5d5d5d;color:#ccc;padding:0 8px;font-size:12px}
.ws{width:164px;height:24px;margin-left:8px;margin-right:2px}

.toolbar{height:41px;flex:none;display:flex;align-items:center;background:#444;padding:2px 0 0 3px;border-bottom:1px solid #555}
.vgrip{width:3px;height:34px;flex:none;background:repeating-linear-gradient(#999 0 1px,transparent 1px 3px)}
.toolbar .vgrip{margin-right:5px}
.tb{width:40px;height:36px;flex:none;display:flex;align-items:center;justify-content:center;border-radius:4px}
.tb svg{width:28px;height:28px}
.tb.on{background:#5b8bc8}
.tb.on svg{width:30px;height:30px}
.sep{width:1px;height:24px;background:#111;margin:0 3px;flex:none}
.sep.s2{margin:0 3px 0 1px}
.sep.s3{margin:0 9px 0 5px}
.tdrop{height:22px;margin:-10px 0 0 2px;flex:none}
.tdrop.w85{width:85px;margin-left:2px;margin-right:0}
.tdrop.vd{margin-left:1px}
.tdrop.css{width:148px;margin-left:3px}
.tb.al{margin-left:-5.500px}
.snaptxt{font:700 32px "Noto Sans",sans-serif;fill:#ccc}

.ribbontabs{height:24px;flex:none;display:flex;align-items:center;padding:1px 0 0 3px;background:#545454;border-bottom:1px solid #2e2e2e;font-size:14px;color:#8f8f8f}
.vgrip.g2{height:22px;margin-right:5px}
.rt{height:23px;display:flex;align-items:center;justify-content:center;flex:none}
.rt.act{width:132px;background:linear-gradient(#6a6a6a,#5c5c5c);color:#dcdcdc;margin-top:1px;height:21px;border-radius:3px 3px 0 0;border:1px solid #2e2e2e;border-bottom:0}
.chat{width:16px;height:12px;margin-left:10px}
.ribbonpanel{height:24px;flex:none;display:flex;align-items:center;padding-left:3px;background:linear-gradient(#464646,#383838);border-bottom:1px solid #2e2e2e;font-size:14px;color:#ddd}
.rb{height:22px;border:1px solid #555;display:flex;align-items:center;justify-content:center;margin-left:1px;flex:none;background:#3e3e3e;white-space:nowrap}
.gapstrip{height:6px;flex:none;background:#444}

.main{height:748px;flex:none;display:flex}
.gripwrap{height:11px;display:flex;align-items:flex-start;padding:2px 3px 0}
.gripwrap.pad{padding-left:7px;padding-right:8px}
.hgrip{display:block;width:100%;height:2px;background:repeating-linear-gradient(90deg,#aaa 0 1px,transparent 1px 2px)}
.leftstrip{width:50px;flex:none;display:flex;flex-direction:column}
.leftdark{flex:1;background:linear-gradient(90deg,#252525,#303030);border-right:1px solid #000;display:flex;flex-direction:column;align-items:center;justify-content:flex-end}
.playbtn{width:24px;height:24px;margin:0 0 14px;background:#4c4c4c;border-radius:3px;border:1px solid #3a3a3a;display:flex;align-items:center;justify-content:center}
.playbtn svg{width:7px;height:11px}
.vpthumb{width:45px;height:55px;margin:0 0 2px 4px;background:linear-gradient(#5a6a7c 75%,#3f7ed0 90%);border-radius:5px 0 0 5px;padding:9px 3px 0 4px}
.vpthumbin{height:35px;background:#5b646e;border:1px solid #2f3a46;border-radius:2px}

.explorer{width:110px;flex:none;display:flex;flex-direction:column;background:#464646}
.exhead{height:73px;flex:none}
.seltitle{margin:4px 0 0 21px;font-size:14.500px;color:#e6e6e6}
.chev{color:#5a5a8a;font-size:18px;line-height:14px;text-align:right;padding-right:8px;margin-top:4px}
.exbody{flex:1;display:flex;min-height:0}
.xcol{width:30px;flex:none;padding:3px 0 0 5px;border-right:1px solid #3a3a3a}
.xi{width:24px;height:24px;background:#5b8bc8;margin-bottom:3px}
.xi svg,.xp svg{width:24px;height:24px}
.xp{width:24px;height:24px;margin-bottom:3px}
.xsep{width:19px;height:1px;background:#888;margin:1px 0 4px 2px}
.xsep.s{margin:2px 0 5px 2px}
.xlist{flex:1;display:flex;flex-direction:column;padding-right:6px;min-width:0}
.xhead{height:23px;border:1px solid #5a5a5a;color:#eee;line-height:21px;padding-left:3px;overflow:hidden;white-space:nowrap;font-size:12px;flex:none;width:75px}
.xrow{height:22px;display:flex;align-items:center;flex:none;width:74px}
.stub{width:10px;height:14px;margin:-14px 0 0 9px;border-left:1px dotted #666;border-bottom:1px dotted #666;flex:none}
.xrow:first-of-type .stub{height:4px}
.roweye{width:19px;height:11px;margin-left:1px;flex:none}
.rowdot{width:14px;height:14px;border-radius:50%;background:#d8d8d8;margin-left:2px;flex:none}
.rowname{flex:none;height:22px;line-height:22px;white-space:nowrap;background:#5c5c5c;color:#999;font-size:12px;margin-left:5px;padding-left:2px;width:15px}
.rowname.cur{background:#6c6c6c;color:#eee}
.xscroll{margin-top:auto;height:21px;flex:none;width:74px;background:#fff;display:flex;align-items:center;justify-content:space-between;padding:0 6px}
.xscroll svg{width:8px;height:12px}
.xthumb{width:21px;height:19px;background:#ccc;margin-left:-10px}
.chev.low{margin:1px 0 17px;padding-right:0}

.viewport{flex:none;width:1506px;background:#383838;border:2px solid #756436;position:relative}
.vplabel{padding:6px 0 0 3px;font-size:13px;letter-spacing:.35px;color:#d0d0d0;position:relative;z-index:1;white-space:nowrap}
.meshsvg{position:absolute;left:0;top:0;width:1502px;height:744px}
.gl,.tl{font:10px "Liberation Sans",sans-serif}
.cl{font:700 7px "Liberation Sans",sans-serif}
.cd{font:700 10px "Liberation Sans",sans-serif;fill:#8c8c8c}
.cube{filter:blur(.5px)}

.cmd{width:254px;flex:none;display:flex;flex-direction:column;background:#3f3f3f}
.rgrip{padding-left:7px;padding-right:2px}
.cmdtabs{height:34px;flex:none;display:flex;gap:3px;padding-left:6px}
.ct{width:37px;height:34px;background:#383838;border-radius:4px 4px 0 0;display:flex;align-items:center;justify-content:center}
.ct.act{background:#464646}
.ct svg{width:20px;height:20px}
.cmdbody{margin-left:6px;height:701px;background:#464646;overflow:hidden;padding-top:10px;display:flex;flex-direction:column;border-radius:0 0 3px 3px}
.namerow{display:flex;margin-left:5px;flex:none}
.field{background:#5d5d5d;height:22px;color:#ddd;padding:0 4px;display:flex;align-items:center;font-size:12.200px}
.name{width:208px;padding-bottom:2px}
.swatch{width:21px;height:22px;margin-left:7px;background:#ee98c6;border-top:1px solid #111;border-left:1px solid #111}
.modlist{width:238px;margin:13px 0 0 5px;flex:none;padding-right:9px}
.modbtns{display:grid;grid-template-columns:113px 113px;grid-auto-rows:22px;gap:6px;margin:16px 0 0 7px;flex:none}
.mb{background:#5c5c5c;border-radius:3px;display:flex;align-items:center;justify-content:center;color:#ddd;font-size:12.500px}
.mb.off{color:#8a8a8a}
.stack{width:239px;height:126px;margin:10px 0 0 5px;border:2px solid #f2f2f2;flex:none;background:#444}
.srow{height:20px;display:flex;align-items:center;color:#eee;border-bottom:1px solid #8a8a8a;font-size:12.200px}
.srow.two{height:21px;padding-top:1px}
.srow.sel{background:#5b8bc8;color:#eee;border-bottom-color:#333}
.seye{width:24px;height:19px;background:#454545;display:flex;align-items:center;justify-content:center;flex:none}
.sey{width:17px;height:10px}
.stxt{margin-left:26px}
.stri{width:16px;height:16px;margin-left:auto;margin-right:6px}
.sarrow{width:0;height:0;border-left:6px solid #ccc;border-top:4px solid transparent;border-bottom:4px solid transparent;margin:0 12px 0 7px;flex:none}
.stools{height:28px;margin:7px 0 0;display:flex;align-items:center;flex:none;padding-left:9px}
.st{width:24px;height:24px;flex:none}
.ssep{width:1px;height:16px;background:#111;flex:none;margin:0 6px 0 7px}
.stbtn{width:28px;height:28px;background:#5b8bc8;border-radius:4px;display:flex;align-items:center;justify-content:center;flex:none}
.stbtn svg{width:14px;height:24px}
.stools svg.st:nth-of-type(2){margin-left:2px}
.stools svg.st:nth-of-type(3){margin-left:7px}
.stools svg.st:nth-of-type(4){margin-left:4px}
.sash{height:3px;margin:18px 0 0 11px;display:flex;align-items:center;flex:none;width:225px}
.sash span{flex:1;height:1px;background:#6c6c6c}
.sash i{width:13px;height:3px;margin:0 4px;background:repeating-linear-gradient(90deg,#bbb 0 1px,transparent 1px 2px)}
.rollwrap{display:flex;margin:6px 0 0 4px;flex:1;min-height:0}
.roll{width:228px;background:#4f4f4f;border-radius:3px 3px 0 0;overflow:hidden}
.rhead{height:22px;display:flex;align-items:center;padding-left:7px;color:#eee;font-size:12.800px;margin-bottom:9px}
.rhead b{margin-left:6px}
.rtri{width:0;height:0;border-left:4px solid transparent;border-right:4px solid transparent;border-top:6px solid #aaa;flex:none}
.rdots{width:7px;height:7px;margin-left:auto;margin-right:9px;background:radial-gradient(#999 45%,transparent 50%) 0 0/2px 2px}
.grp{width:204px;margin-left:12px;border:1px solid #383838;border-radius:3px;position:relative;margin-bottom:10px;font-size:12px;color:#e2e2e2}
.lg{position:absolute;left:6px;top:-7px;background:#4f4f4f;padding:0 2px;line-height:14px;color:#e0e0e0;white-space:nowrap}
.g-main{height:126px;padding-top:11px}
.g-surf{height:106px;padding-top:11px}
.g-upd{height:90px;padding-top:11px}
.r{height:22px;display:flex;align-items:center}
.r.it{padding-left:50px}
.rl{width:70px;flex:none;white-space:nowrap;text-align:right}
.spin{width:65px;height:20px;background:#616161;margin-left:8px;display:flex;align-items:center;padding:0 5px 0 4px;color:#ddd;flex:none}
.spin.dis{background:#4f4f4f;border:1px solid #5a5a5a;color:#777;margin-left:auto;margin-right:9px}
.spa{width:7px;height:12px;margin-left:auto;flex:none;position:relative;display:block}
.spa::before,.spa::after{content:"";position:absolute;left:0;width:0;height:0;border-left:3.500px solid transparent;border-right:3.500px solid transparent}
.spa::before{top:0;border-bottom:5px solid #bbb}
.spa::after{bottom:0;border-top:5px solid #bbb}
.dis .spa::before{border-bottom-color:#777}
.dis .spa::after{border-top-color:#777}
.cb{width:13px;height:13px;background:#5e5e5e;border:1px solid #484848;display:block;flex:none;font-size:11px;line-height:11px;color:#ddd;text-align:center}
.r .cb{margin:0 4px 0 11px}
.r.ri{margin-top:6px}
.r.iso{margin-top:12px}
.r.exn{margin-top:4px}
.r2{height:20px;display:flex;align-items:center;padding-left:14px}
.r2 .cb{margin-right:4px}
.lg+.r2{margin-top:1px}
.r2.sb{padding-left:13px}
.r2.in{padding-left:54px;margin-top:2px}
.r2.rad{padding-left:23px}
.radio{width:13px;height:13px;border-radius:50%;background:#5e5e5e;border:1px solid #484848;margin-right:8px;flex:none}
.radio.on{background:radial-gradient(#ddd 50%,#5e5e5e 55%)}
.rscroll{width:7px;margin-left:4px;height:340px;background:#383838;border-radius:3px;flex:none}
.rscroll span{display:block;height:285px;background:#5a5a5a;border-radius:3px}

.timeslider{height:33px;flex:none;display:flex;align-items:flex-start;padding:7px 0 0 3px;background:#444;gap:2px;color:#bbb;font-size:13px}
.vgrip.g3{height:26px;margin-right:5px}
.ts{height:20px;background:#5a5a5a;border-radius:3px;display:flex;align-items:center;justify-content:center;font-size:12.500px}
.ts.small{width:18px;color:#aaa}
.ts.mid{width:154px}
.trackrow{height:30px;flex:none;display:flex;background:#444;padding-left:3px;position:relative}
.vgrip.tall{height:30px;margin-right:0}
.curve{width:68px;flex:none;display:flex;align-items:center;padding-left:22px}
.curve svg{width:20px;height:14px}
.track{width:1784px;flex:none;border-top:1px solid #111;background:repeating-linear-gradient(90deg,#6c6c6c 0 1px,transparent 1px 17.700px) 6px 0/100% 14px no-repeat #2d2d2d;background-origin:content-box;padding-left:6px;position:relative}
.trackrow::before{content:"";position:absolute;left:11px;top:0;width:70px;height:1px;background:#111}
.labels{display:flex;margin-left:-44.250px;height:29px}
.labels span{width:88.500px;flex:none;text-align:center;font-size:12px;color:#a8a8a8;padding-top:12px;line-height:16px;position:relative}
.labels span::before{content:"";position:absolute;left:44px;top:0;bottom:0;width:1px;background:#6c6c6c}
.labels span:first-child::before{display:none}
.thumb{position:absolute;left:0;top:1px;width:11px;height:28px;background:#7a6a14;color:#b8a83a;text-align:center;font-size:12px;padding-top:12px;line-height:16px;border:1px solid #8c7c20}

.status{height:69px;flex:none;display:flex;background:#464646}
.mini{width:123px;margin:7px 0 0 4px;flex:none}
.pink{height:28px;background:#dcc1c3;border:1px solid #bbb}
.script{height:27px;margin-top:2px;background:#fff;border:1px solid #aaa;font:14.600px "Liberation Mono",monospace;color:#8a8a8a;line-height:25px;padding:0 4px;overflow:hidden;white-space:nowrap}
.vbar{width:1px;height:62px;background:#111;margin:4px 0 0 4px;flex:none}
.msg{width:679px;flex:none;margin-left:5px;padding-top:13px;color:#ddd;font-size:12px;line-height:18px}
.msg div+div{margin-top:13px}
.coords{width:544px;flex:none;padding-top:11px}
.crow{display:flex;align-items:center;height:21px}
.ci{width:18px;height:18px;flex:none}
.lock{width:16px;height:18px;margin-left:17px}
.abs{width:16px;height:16px;margin-left:17px}
.ax{margin-left:1px;width:18px;flex:none;font-size:12.500px;color:#ddd;text-align:center}
.abs+.ax{margin-left:7px;width:20px}
.cin{width:84px;height:21px;background:#5d5d5d;display:flex;align-items:center;padding:0 4px;color:#ccc;flex:none;font-size:12.500px}
.grid{margin-left:6px;font-size:12px;white-space:nowrap}
.crow.two{margin-top:7px;height:25px;padding-left:375px}
.tagbar{width:1px;height:25px;background:#111;flex:none}
.tagbtn{width:26px;height:25px;margin-left:1px;background:#5b8bc8;border-radius:4px;display:flex;align-items:center;justify-content:center}
.tagbtn svg{width:17px;height:17px}
.tagt{margin-left:7px;white-space:nowrap;font-size:12.500px}
.anim{width:158px;flex:none;padding:12px 0 0}
.arow{display:flex;align-items:center;height:20px}
.a1{width:18px;height:14px;flex:none}
.a2{width:18px;height:20px;flex:none;margin:0 9px 0 10px}
.arow .abar{width:1px;height:20px;background:#111;margin:0 0 0 7px;flex:none}
.arow .abar+.a1{margin-left:7px}
.arow .a2+.a1{margin-left:0}
.arow .a2+.a1+.abar{margin-left:6px}
.arow .a2+.a1+.abar+.a1{margin-left:4px}
.r2nd{margin-top:7px;height:25px}
.r2nd .abar{height:24px}
.fin{width:84px;height:24px;background:#5d5d5d;margin-left:2px;display:flex;align-items:center;padding:0 4px 0 6px;color:#ccc;flex:none;font-size:12.500px}
.a3{width:20px;height:20px;margin-left:2px;flex:none}
.keybtn{width:53px;height:54px;margin:8px 0 0;background:#5e5e5e;border-radius:3px;display:flex;align-items:center;justify-content:center;flex:none}
.keybtn svg{width:34px;height:38px}
.keycol{width:57px;margin:8px 0 0 5px;flex:none}
.kb{height:25px;background:#5e5e5e;border-radius:3px;display:flex;align-items:center;justify-content:center;font-size:12.500px;color:#ccc}
.keycol .kb+.kb{margin-top:2px}
.selcol{width:143px;margin:8px 0 0 6px;flex:none}
.seldrop{height:22px;color:#ccc;padding:0 10px 0 8px;font-size:12.500px}
.selrow{display:flex;align-items:flex-start;margin-top:6px}
.spl{width:22px;height:22px;margin:1px 6px 0 3px;flex:none}
.filters{width:110px}
.nav{width:112px;margin:8px 0 0 12px;flex:none;display:grid;grid-template-columns:repeat(4,28px);grid-auto-rows:28px;align-items:center;justify-items:center}
.nav svg{width:20px;height:20px}

.taskbar{height:50px;flex:none;display:flex;align-items:stretch;background:linear-gradient(90deg,#040404,#0e0d0b 30%,#0a0a08 70%,#060606);color:#fff}
.start{width:60px;flex:none;display:flex;align-items:center;justify-content:center}
.start svg{width:20px;height:20px}
.search{width:430px;flex:none;background:#f2f2f2;display:flex;align-items:center;color:#222}
.cortana{width:22px;height:24px;border:3px solid #111;border-radius:50%;margin-left:14px;flex:none;background:#f2f2f2;box-shadow:inset 0 0 0 1px #666}
.stext{margin-left:15px;font-size:16px;font-family:"Open Sans","Noto Sans",sans-serif;white-space:nowrap}
.mic{width:16px;height:24px;margin-left:auto;margin-right:18px}
.taskview{width:62px;flex:none;display:flex;align-items:center;justify-content:center;padding-right:2px}
.taskview svg{width:24px;height:20px}
.app{width:62px;flex:none;display:flex;align-items:center;justify-content:center;position:relative;padding-bottom:3px}
.app svg{width:29px;height:29px}
.app.run::after{content:"";position:absolute;left:5px;right:6px;bottom:0;height:3px;background:#76d6dd}
.app.cur{background:#333}
.app.cur::after{left:0;right:0}
.tile{width:27px;height:27px;border:2px solid;display:flex;align-items:center;justify-content:center;font-size:15px;font-weight:600;line-height:1}
.tile svg{width:21px;height:21px}
.acad{width:30px;height:30px;background:linear-gradient(135deg,#fff,#f2d8d8);color:#c8262a;display:flex;align-items:center;justify-content:center;font:900 26px/30px "Liberation Sans",sans-serif}
.maxtile{width:30px;height:30px;background:linear-gradient(#d8f2f2,#a8dede);color:#14908f;display:flex;flex-direction:column;align-items:center;font-weight:800;padding-top:1px}
.maxtile span{font-size:17px;line-height:21px;display:block;height:21px}
.maxtile i{font-size:5px;line-height:6px;height:6px;font-style:normal;margin-left:10px}
.wordw{font:700 15px "Liberation Sans",sans-serif;fill:#fff}
.tray{flex:1;display:flex;align-items:center;min-width:0}
.tr{flex:none}
.people{width:22px;height:22px;margin-left:57px}
.chevup{width:16px;height:10px;margin-left:26px}
.batt{width:22px;height:14px;margin-left:13px}
.wifi{width:20px;height:18px;margin-left:10px}
.vol{width:20px;height:18px;margin-left:6px}
.clock{width:84px;margin-left:20px;text-align:center;font-size:15px;line-height:23px;flex:none;font-family:"Open Sans","Noto Sans",sans-serif;white-space:nowrap;color:#f4f4f4}
.notif{width:32px;height:32px;margin-left:17px;position:relative;flex:none}
.notif svg{width:20px;height:20px;margin-top:2px}
.badge{position:absolute;left:9px;top:13px;width:20px;height:20px;border-radius:50%;background:#333;border:1px solid #bbb;font-size:13px;line-height:18px;font-weight:700;text-align:center}
```
FILE: mesh.js
```js
(function(){
var T=[[685,460],[760,421],[840,382],[910,347],[957,325],[985,314],[1009,320],[1026,335],[1075,403],[1120,465],[1138,495],[1146,525],[1137,552],[1060,592],[990,628],[920,665],[860,690],[790,690],[725,664],[680,628],[648,578],[641,535],[656,487]];
var R=[[723,497],[760,478],[799,460],[847,447],[880,452],[905,462],[930,477],[945,490],[955,502],[965,518],[970,535],[969,560],[951,593],[923,618],[889,640],[837,663],[785,663],[734,643],[703,613],[685,573],[685,543],[696,520],[707,508]];
var H=[[860,612],[864,607],[870,604],[878,600],[885,597],[892,595],[900,598],[906,602],[911,606],[915,610],[920,615],[918,620],[912,624],[905,628],[889,633],[878,630],[868,628],[860,625],[855,621],[854,617],[855,615],[856,614],[858,613]];
var S=T.slice();
var sideOuter={12:[1137,590],13:[1100,641],14:[1003,695],15:[906,745],16:[830,762],17:[755,745],18:[690,698],19:[658,643],20:[644,597]};
Object.keys(sideOuter).forEach(function(k){S[k]=sideOuter[k];});

function cr(P,u){
  var n=P.length,i=Math.floor(u),t=u-i;
  var a=P[(i-1+n)%n],b=P[(i+n)%n],c=P[(i+1)%n],d=P[(i+2)%n],t2=t*t,t3=t2*t;
  return [0,1].map(function(j){
    return 0.5*(2*b[j]+(c[j]-a[j])*t+(2*a[j]-5*b[j]+4*c[j]-d[j])*t2+(3*b[j]-a[j]-3*c[j]+d[j])*t3);
  });
}
function lerp(p,q,s){return [p[0]+(q[0]-p[0])*s,p[1]+(q[1]-p[1])*s];}
function fmt(p){return p[0].toFixed(1)+' '+p[1].toFixed(1);}
function dist(p,q){return Math.hypot(p[0]-q[0],p[1]-q[1]);}
function lod(gap,idx){
  var step=gap<1.4?4:(gap<2.8?2:1);
  return idx%step===0;
}

// rings and spokes of one part of the surface; lines closer than about 3px are thinned out
function patch(A,B,u0,u1,nRing,nSpoke,pow,stepU){
  var d='',r,i,u,pen,s,ok;
  function sAt(k){return Math.pow(k/nRing,pow);}
  function P(u,s){return lerp(cr(A,u),cr(B,u),s);}
  for(r=0;r<=nRing;r++){
    s=sAt(r);
    pen=false;
    for(u=u0;u<=u1+1e-6;u+=stepU){
      var p=P(u,s);
      var q=P(u,r<nRing?sAt(r+1):sAt(r-1));
      ok=lod(dist(p,q),r);
      if(ok){d+=(pen?'L':'M')+fmt(p);}
      pen=ok;
    }
  }
  var du=(u1-u0)/nSpoke;
  for(i=0;i<=nSpoke;i++){
    u=u0+du*i;
    pen=false;
    for(r=0;r<=nRing;r++){
      s=sAt(r);
      var a=P(u,s),b=P(u+du,s);
      ok=lod(dist(a,b),i);
      if(ok){d+=(pen?'L':'M')+fmt(a);}
      pen=ok;
    }
  }
  return d;
}

var K=T.length;
var d='';
d+=patch(T,R,0,K,24,190,0.8,0.06);
d+=patch(R,H,0,K,22,180,1.2,0.06);
d+=patch(T,S,11,21,11,190,1.25,0.05);

var ns='http://www.w3.org/2000/svg';
var g=document.getElementById('meshlines');
function add(tag,attrs){var e=document.createElementNS(ns,tag);for(var k in attrs){e.setAttribute(k,attrs[k]);}g.appendChild(e);return e;}

add('path',{d:d,fill:'none',stroke:'#fff','stroke-width':'1','shape-rendering':'crispEdges'});

// thick white rim of the bowl: strong on the far side, fading out towards the front
var u,rimA=[],rimB=[],sil=[];
for(u=20;u<=K+12.2;u+=0.1){rimA.push(fmt(cr(R,u)));}
for(u=18.5;u<=20.1;u+=0.1){rimB.push(fmt(cr(R,u)));}
for(u=0;u<K;u+=0.1){sil.push(fmt(cr(S,u)));}
add('path',{d:'M'+rimA.join('L'),fill:'none',stroke:'#fff','stroke-width':'6'});
add('path',{d:'M'+rimB.join('L'),fill:'none',stroke:'#fff','stroke-width':'3'});

// dark drain opening with its own small grid
var Q=[[854,617],[892,595],[920,615],[889,633]],hole='',i;
add('path',{d:'M854 617 892 595 920 615 889 633Z',fill:'#383838',stroke:'none'});
for(i=1;i<6;i++){var s=i/6;
  hole+='M'+fmt(lerp(Q[0],Q[1],s))+'L'+fmt(lerp(Q[3],Q[2],s));
  hole+='M'+fmt(lerp(Q[0],Q[3],s))+'L'+fmt(lerp(Q[1],Q[2],s));
}
add('path',{d:hole,fill:'none',stroke:'#fff','shape-rendering':'crispEdges'});

// overflow ridge above the drain
add('path',{d:'M916 545C914 565 912 580 906 592',fill:'none',stroke:'#fff','stroke-width':'5'});

// the two fixing holes on the deck
add('circle',{cx:952,cy:390,r:7.5,fill:'#383838',stroke:'#fff','stroke-width':'2.500'});
add('path',{d:'M946 390h12M949 385v10M955 385v10',stroke:'#fff','stroke-width':'.8',fill:'none'});
add('circle',{cx:1041,cy:518,r:8,fill:'#fff','fill-opacity':'.9'});

// cyan selection silhouette
add('path',{d:'M'+sil.join('L')+'Z',fill:'none',stroke:'#62e4e6','stroke-width':'2.600'});
})();
```
